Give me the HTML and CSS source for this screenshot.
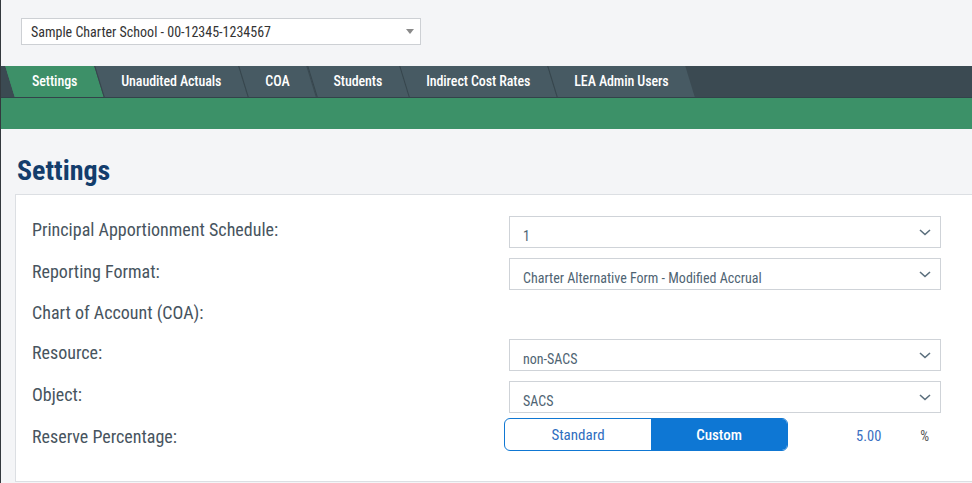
FILE: index.html
```html
<!DOCTYPE html>
<html lang="en">
<head>
<meta charset="utf-8">
<title>Settings</title>
<link rel="stylesheet" href="styles.css">
</head>
<body>
<div class="page">
  <div class="topbar">
    <div class="school-select">
      <span>Sample Charter School - 00-12345-1234567</span>
      <span class="tri"></span>
    </div>
  </div>
  <nav class="tabbar">
    <a class="tab active">Settings</a>
    <a class="tab">Unaudited Actuals</a>
    <a class="tab">COA</a>
    <a class="tab">Students</a>
    <a class="tab">Indirect Cost Rates</a>
    <a class="tab">LEA Admin Users</a>
  </nav>
  <div class="greenband"></div>
  <h1 class="title">Settings</h1>
  <section class="card">
    <div class="row">
      <div class="label">Principal Apportionment Schedule:</div>
      <div class="select"><span>1</span><svg class="chev" viewBox="0 0 12 7" width="12" height="7"><path d="M1 1 L6 5.5 L11 1" fill="none" stroke="#5b6f7d" stroke-width="1.6"/></svg></div>
    </div>
    <div class="row">
      <div class="label">Reporting Format:</div>
      <div class="select"><span>Charter Alternative Form - Modified Accrual</span><svg class="chev" viewBox="0 0 12 7" width="12" height="7"><path d="M1 1 L6 5.5 L11 1" fill="none" stroke="#5b6f7d" stroke-width="1.6"/></svg></div>
    </div>
    <div class="row short">
      <div class="label">Chart of Account (COA):</div>
    </div>
    <div class="row">
      <div class="label">Resource:</div>
      <div class="select"><span>non-SACS</span><svg class="chev" viewBox="0 0 12 7" width="12" height="7"><path d="M1 1 L6 5.5 L11 1" fill="none" stroke="#5b6f7d" stroke-width="1.6"/></svg></div>
    </div>
    <div class="row">
      <div class="label">Object:</div>
      <div class="select"><span>SACS</span><svg class="chev" viewBox="0 0 12 7" width="12" height="7"><path d="M1 1 L6 5.5 L11 1" fill="none" stroke="#5b6f7d" stroke-width="1.6"/></svg></div>
    </div>
    <div class="row reserve">
      <div class="label">Reserve Percentage:</div>
      <div class="toggle">
        <span class="opt">Standard</span>
        <span class="opt on">Custom</span>
      </div>
      <span class="pct">5.00</span>
      <span class="pct-sign">%</span>
    </div>
  </section>
</div>
</body>
</html>
```
FILE: styles.css
```css
html, body {
  margin: 0;
  padding: 0;
}
body {
  background: #f4f5f7;
  font-family: "Roboto Condensed", Roboto, "Liberation Sans", sans-serif;
  overflow: hidden;
}
.page {
  border-left: 1px solid #33393e;
  min-height: 483px;
  box-sizing: border-box;
}
.topbar {
  height: 66px;
  padding: 18px 0 0 20px;
  box-sizing: border-box;
}
.school-select {
  width: 400px;
  height: 27px;
  box-sizing: border-box;
  background: #fff;
  border: 1px solid #cdd0d4;
  display: flex;
  align-items: center;
  justify-content: space-between;
  padding: 0 6px 0 9px;
  font-size: 14px;
  color: #333;
}
.tri {
  width: 0;
  height: 0;
  border-left: 4px solid transparent;
  border-right: 4px solid transparent;
  border-top: 5px solid #8a8a8a;
}
.tabbar {
  height: 32px;
  background: #3b4a52;
  display: flex;
  padding-left: 9px;
  border-bottom: 1px solid #33424a;
  box-sizing: border-box;
  overflow: hidden;
}
.tab {
  position: relative;
  z-index: 0;
  padding: 0 22px 1px 22px;
  display: flex;
  align-items: center;
  color: #fff;
  font-size: 14px;
  font-weight: 500;
  letter-spacing: -0.1px;
}
.tab::before {
  content: "";
  position: absolute;
  inset: 0;
  z-index: -1;
  background: #475a63;
  border-left: 1px solid #36454c;
  transform: skewX(17deg);
}
.tab.active::before {
  background: #3d9068;
  border-left-color: #3d9068;
}
.greenband {
  height: 31px;
  background: #3c9168;
}
.title {
  margin: 0;
  padding: 26px 0 0 16px;
  height: 65px;
  box-sizing: border-box;
  font-size: 28px;
  font-weight: 700;
  color: #133d6c;
  line-height: 32px;
}
.card {
  margin-left: 14px;
  margin-right: -4px;
  background: #fff;
  border: 1px solid #dcdfe3;
  padding: 21px 0 30px 16px;
  display: flex;
  flex-direction: column;
  gap: 10px;
  height: 288px;
  box-sizing: border-box;
}
.row {
  display: flex;
  align-items: center;
  height: 32px;
}
.row.short {
  height: 29px;
}
.row.reserve {
  height: 33px;
  margin-top: -5px;
}
.label {
  width: 477px;
  flex: none;
  font-size: 18px;
  color: #47545e;
  padding-bottom: 5px;
}
.reserve .label {
  width: 472px;
  padding-bottom: 0;
  margin-top: 4px;
}
.select {
  width: 432px;
  height: 32px;
  box-sizing: border-box;
  border: 1px solid #cfd3d8;
  display: flex;
  align-items: center;
  justify-content: space-between;
  padding: 0 9px 0 13px;
  font-size: 14px;
  color: #4f6473;
}
.select span {
  padding-top: 8px;
}
.chev {
  display: block;
}
.toggle {
  width: 284px;
  height: 33px;
  box-sizing: border-box;
  border: 1px solid #0f77d3;
  border-radius: 6px;
  display: flex;
  overflow: hidden;
}
.opt {
  flex: 1 1 0;
  display: flex;
  align-items: center;
  justify-content: center;
  font-size: 15px;
  color: #2f6ec0;
}
.opt:first-child {
  flex: 0 0 146px;
}
.opt.on {
  background: #0e77d4;
  color: #fff;
  font-weight: 500;
}
.pct {
  margin-left: 68px;
  font-size: 14.5px;
  color: #3a6fc2;
  margin-top: 3px;
}
.pct-sign {
  margin-left: 39px;
  font-size: 14px;
  color: #555;
  margin-top: 3px;
}
```
